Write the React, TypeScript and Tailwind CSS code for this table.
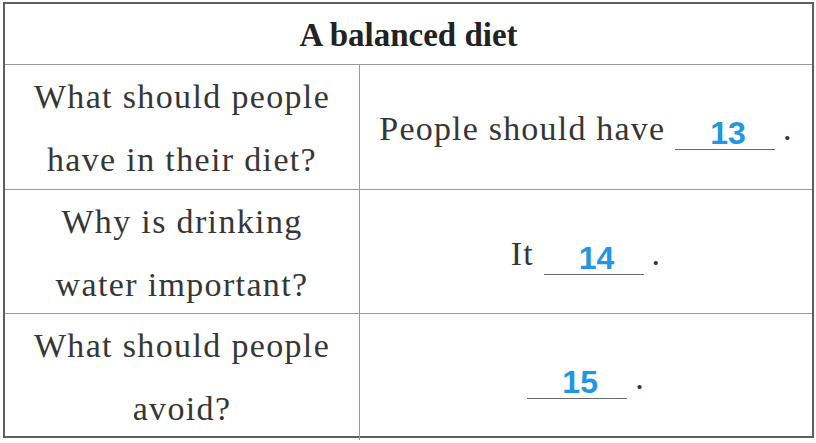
function Blank({ n }: { n: string }) {
  return (
    <span className="inline-block w-[100px] border-b border-[#6b6b6b] pl-[6px] text-center align-[-4px] leading-[31px] tracking-normal">
      <span className="font-[Liberation_Sans] text-[32px] font-bold text-[#2196e3]">{n}</span>
    </span>
  );
}

const rows = [
  {
    q: ['What should people', 'have in their diet?'],
    a: (
      <>
        People should have <Blank n="13" /><span className="ml-[8px]">.</span>
      </>
    ),
    h: 'h-[125px]',
  },
  {
    q: ['Why is drinking', 'water important?'],
    a: (
      <>
        It <Blank n="14" /><span className="ml-[8px]">.</span>
      </>
    ),
    h: 'h-[124px]',
  },
  {
    q: ['What should people', 'avoid?'],
    a: (
      <>
        <Blank n="15" /><span className="ml-[8px]">.</span>
      </>
    ),
    h: 'h-[122px]',
  },
];

export default function App() {
  return (
    <div className="w-[816px] h-[443px] bg-white pl-[3px] pt-[2px]">
      <div className="w-[811px] border-2 border-[#5e5e5e] text-[#363636]">
        {/* title */}
        <div className="h-[61px] border-b border-[#9a9a9a] flex items-center justify-center">
          <h1 className="font-[Liberation_Serif] text-[33px] font-bold text-[#222] leading-none pt-[2px]">A balanced diet</h1>
        </div>

        {rows.map((r, i) => (
          <div
            key={i}
            className={`grid grid-cols-[355px_1fr] ${r.h} ${i < rows.length - 1 ? 'border-b border-[#9a9a9a]' : ''}`}
          >
            <div className="border-r border-[#9a9a9a] flex flex-col justify-center text-center">
              {r.q.map((line) => (
                <span key={line} className="font-[Liberation_Serif] text-[34px] leading-[63px] tracking-[1.35px]">
                  {line}
                </span>
              ))}
            </div>
            <div className="flex items-center justify-center">
              <p className="font-[Liberation_Serif] text-[34px] leading-[63px] tracking-[1.2px]">{r.a}</p>
            </div>
          </div>
        ))}
      </div>
    </div>
  );
}
